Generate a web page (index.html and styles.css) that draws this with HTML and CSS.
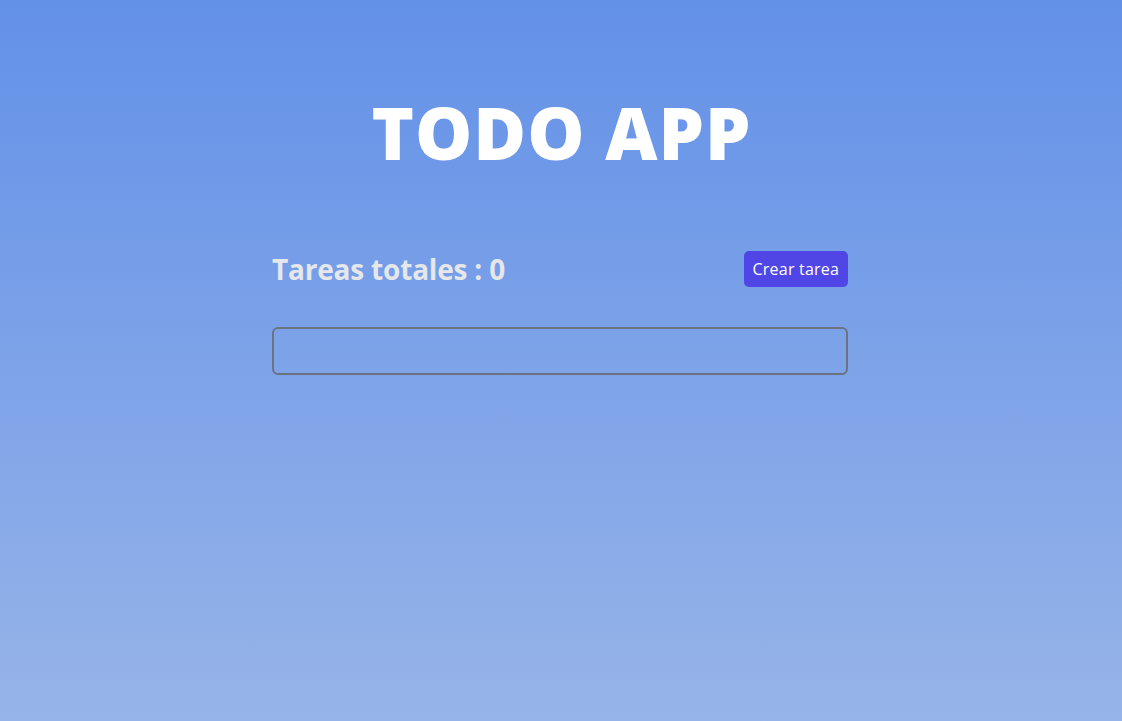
FILE: index.html
```html
<!DOCTYPE html>
<html lang="es">
<head>
<meta charset="utf-8">
<title>TODO APP</title>
<link rel="stylesheet" href="styles.css">
</head>
<body>
<main class="app">
  <h1 class="title">TODO APP</h1>
  <section class="panel">
    <div class="toolbar">
      <h2 class="count">Tareas totales : 0</h2>
      <button class="btn-create" type="button">Crear tarea</button>
    </div>
    <input class="task-input" type="text" aria-label="Nueva tarea">
  </section>
</main>
</body>
</html>
```

FILE: styles.css
```css
* { box-sizing: border-box; }
html, body { height: 100%; }
body {
  margin: 0;
  font-family: "Open Sans", "Noto Sans", sans-serif;
  background: linear-gradient(to bottom, #6391e8 0%, #97b4e8 100%);
  min-height: 100vh;
}
.app {
  display: flex;
  flex-direction: column;
  align-items: center;
  padding-top: 84px;
  padding-right: 2px;
}
.title {
  margin: 0;
  font-size: 72px;
  line-height: 96px;
  font-weight: 800;
  color: #ffffff;
  letter-spacing: 1px;
  padding-left: 3px;
}
.panel {
  width: 576px;
  margin-top: 69px;
  display: flex;
  flex-direction: column;
  gap: 38px;
}
.toolbar {
  display: flex;
  justify-content: space-between;
  align-items: center;
}
.count {
  margin: 0;
  font-size: 28px;
  font-weight: 700;
  color: #e5e7eb;
  line-height: 40px;
  letter-spacing: -0.2px;
}
.btn-create {
  font-family: "Open Sans", "Noto Sans", sans-serif;
  font-size: 16px;
  letter-spacing: 0.2px;
  color: #ffffff;
  background: #4f46e5;
  border: none;
  border-radius: 5px;
  padding: 0 9px;
  height: 36px;
  cursor: pointer;
}
.task-input {
  width: 100%;
  height: 48px;
  background: transparent;
  border: 2px solid #6b7280;
  border-radius: 6px;
  font-size: 16px;
  padding: 0 10px;
  outline: none;
}
```
